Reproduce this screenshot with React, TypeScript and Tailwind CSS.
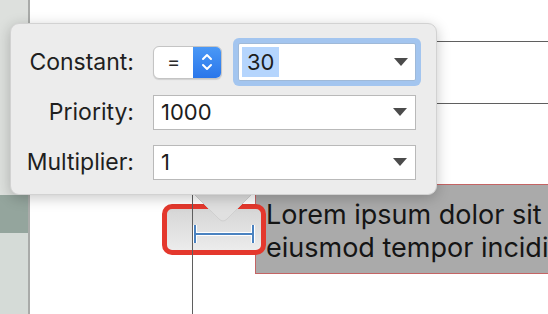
const LABEL = "w-[123px] pr-0 text-right text-[23px] text-[#1f1f1f]"

function Caret() {
  return (
    <svg width="14" height="8" viewBox="0 0 14 8" className="shrink-0">
      <path d="M0 0h14L7 8z" fill="#4b4b4b" />
    </svg>
  )
}

function Field({ value }: { value: string }) {
  return (
    <div className="ml-[19px] flex h-[35px] w-[263px] items-center justify-between border border-[#b9b9b9] bg-white pl-[7px] pr-[8px]">
      <span className="text-[22px] text-[#1d1d1d]">{value}</span>
      <Caret />
    </div>
  )
}

export default function App() {
  return (
    <div className="relative h-[314px] w-[548px] overflow-hidden bg-white font-['Inter',sans-serif]">
      {/* side strip of the editor */}
      <div className="absolute left-0 top-0 flex h-full w-[28px] flex-col bg-[#d5dbd7]">
        <div className="h-[195px] bg-[#dde0dd]" />
        <div className="h-[38px] bg-[#94a59d]" />
      </div>
      <div className="absolute left-[28px] top-0 h-full w-[2px] bg-[#a9aba9]" />

      {/* canvas guides */}
      <div className="absolute left-[192px] top-[41px] h-[280px] w-px bg-[#5f5f5f]" />
      <div className="absolute left-[192px] right-0 top-[41px] h-px bg-[#5f5f5f]" />
      <div className="absolute left-[192px] right-0 top-[103px] h-px bg-[#5f5f5f]" />

      {/* label on canvas */}
      <div className="absolute left-[255px] top-[184px] h-[90px] w-[310px] overflow-hidden border border-[#c46464] bg-[#aaaaaa] pl-[10px] pt-[13px]">
        <div className="whitespace-nowrap text-[27px] leading-[33px] text-[#151515]">Lorem ipsum dolor sit amet,</div>
        <div className="whitespace-nowrap text-[27px] leading-[33px] text-[#151515]">eiusmod tempor incididunt</div>
      </div>

      {/* selected constraint */}
      <div className="absolute left-[162px] top-[204px] h-[51px] w-[104px] rounded-[10px] border-[5px] border-[#e4382d] bg-gradient-to-b from-[#d6d6d6] to-[#ececec]" />
      <div className="absolute left-[192px] top-[204px] h-[51px] w-px bg-[#5f5f5f]" />
      <svg className="absolute left-[192px] top-[223px]" width="64" height="22" viewBox="0 0 64 22">
        <path d="M3 2v18M61 2v18M3 11h58" stroke="#fff" strokeWidth="4" fill="none" />
        <path d="M3 2v18M61 2v18M3 11h58" stroke="#4a82c0" strokeWidth="2" fill="none" />
      </svg>

      {/* popover arrow */}
      <svg className="absolute left-[193px] top-[193px]" width="60" height="30" viewBox="0 0 60 30">
        <path d="M0 0L26 26Q30 30 34 26L60 0Z" fill="#e0e0e0" stroke="#d0d0d0" strokeWidth="1" />
      </svg>

      {/* popover */}
      <div className="absolute left-[10px] top-[23px] h-[172px] w-[427px] rounded-[9px] border border-[#d2d2d2] bg-[#ececec] pt-[13px] shadow-[0_3px_14px_rgba(0,0,0,0.22)]">
        <div className="flex h-[50px] items-center">
          <div className={LABEL}>Constant:</div>
          <div className="ml-[19px] flex h-[33px] w-[69px] overflow-hidden rounded-[6px] border border-[#c4c4c4] bg-white shadow-[0_1px_1px_rgba(0,0,0,0.12)]">
            <div className="flex w-[39px] items-center justify-center text-[20px] text-[#2a2a2a]">=</div>
            <div className="flex flex-1 items-center justify-center bg-gradient-to-b from-[#4a98f6] to-[#2a76ea]">
              <svg width="12" height="20" viewBox="0 0 12 20">
                <path d="M2 7l4-4 4 4M2 13l4 4 4-4" stroke="#fff" strokeWidth="2" fill="none" strokeLinecap="round" strokeLinejoin="round" />
              </svg>
            </div>
          </div>
          <div className="ml-[16px] flex h-[38px] w-[178px] items-center justify-between rounded-[2px] border border-[#9fb9d8] bg-white pl-[3px] pr-[7px] shadow-[0_0_0_5px_#a3c5ef]">
            <span className="bg-[#b5d5fd] px-[5px] text-[22px] leading-[30px] text-[#1d1d1d]">30</span>
            <Caret />
          </div>
        </div>
        <div className="flex h-[50px] items-center">
          <div className={LABEL}>Priority:</div>
          <Field value="1000" />
        </div>
        <div className="flex h-[50px] items-center">
          <div className={LABEL}>Multiplier:</div>
          <Field value="1" />
        </div>
      </div>
    </div>
  )
}
